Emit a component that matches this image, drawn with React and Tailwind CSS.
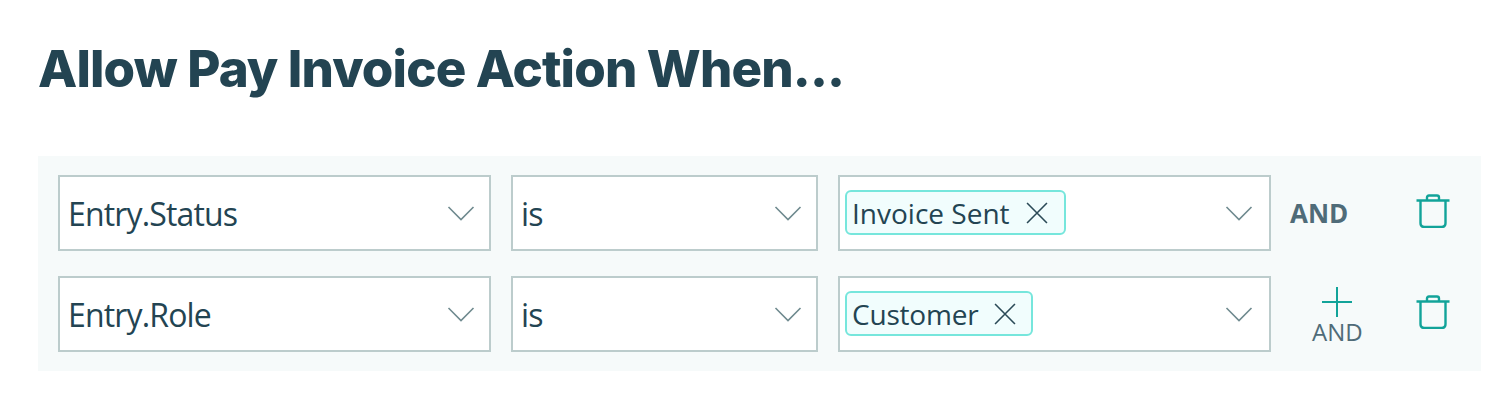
const Chevron = () => (
  <svg width="28" height="16" viewBox="0 0 28 16" fill="none" stroke="#6f8a8f" strokeWidth="1.6" className="shrink-0">
    <path d="M1.5 2 L14 14.5 L26.5 2" />
  </svg>
);

const TrashIcon = () => (
  <svg width="34" height="34" viewBox="0 0 34 34" fill="none" stroke="#12a399" strokeWidth="2.4" strokeLinejoin="round">
    <path d="M0.5 6.5 H33.5" />
    <path d="M11 6.5 V3.5 Q11 1.5 13 1.5 H21 Q23 1.5 23 3.5 V6.5" />
    <path d="M4.5 6.5 V29 Q4.5 33 8.5 33 H25.5 Q29.5 33 29.5 29 V6.5" />
  </svg>
);

const PlusIcon = () => (
  <svg width="30" height="30" viewBox="0 0 30 30" fill="none" stroke="#12a399" strokeWidth="2">
    <path d="M15 0 V30 M0 15 H30" />
  </svg>
);

const CloseIcon = () => (
  <svg width="22" height="22" viewBox="0 0 21 21" fill="none" stroke="#2b4a57" strokeWidth="1.5">
    <path d="M1 1 L20 20 M20 1 L1 20" />
  </svg>
);

const Select = ({ width, right, children }) => (
  <div className={`${width} ${right} h-[75.5px] shrink-0 flex items-center justify-between bg-white border-2 border-[#bccccc] pl-[8px]`}>
    <div className="flex items-center text-[32px] tracking-[-0.85px] text-[#234452]">{children}</div>
    <Chevron />
  </div>
);

const Tag = ({ label, width, spacing }) => (
  <div className={`${width} h-[45px] -ml-[3px] flex items-center rounded-[6px] border-2 border-[#76e6dc] bg-[#f1fdfd] pl-[5px] text-[28px] ${spacing} text-[#234452]`}>
    <span>{label}</span>
    <span className="ml-[16px] flex items-center"><CloseIcon /></span>
  </div>
);

const Row = ({ field, tag, action }) => (
  <div className="flex items-center gap-[20px]">
    <Select width="w-[433px]" right="pr-[14px]"><span className="pt-[2px]">{field}</span></Select>
    <Select width="w-[307px]" right="pr-[14px]"><span className="pt-[2px]">is</span></Select>
    <Select width="w-[433px]" right="pr-[16px]">{tag}</Select>
    <div className="w-[134px] shrink-0 flex items-center h-[75px]">{action}</div>
    <div className="-ml-[29px] -mt-[4px]"><TrashIcon /></div>
  </div>
);

export default function App() {
  return (
    <div className="w-[1500px] h-[412px] bg-white overflow-hidden font-['Open_Sans','Noto_Sans',sans-serif]">
      <h1 className="pl-[38px] pt-[38px] h-[156px] text-[51px] leading-[62px] font-extrabold tracking-[-0.85px] text-[#234452] font-['Inter',sans-serif]">
        Allow Pay Invoice Action When...
      </h1>
      <div className="ml-[38px] w-[1443px] h-[215px] bg-[#f6fafa] px-[20px] pt-[19px] flex flex-col gap-[25.5px]">
        <Row
          field="Entry.Status"
          tag={<Tag label="Invoice Sent" width="w-[221px]" spacing="tracking-normal" />}
          action={<span className="-ml-[1px] pt-[2px] text-[26px] font-bold text-[#4f6b78]">AND</span>}
        />
        <Row
          field="Entry.Role"
          tag={<Tag label="Customer" width="w-[188px]" spacing="tracking-[-0.2px]" />}
          action={
            <div className="ml-[21px] mt-[6px] flex flex-col items-center">
              <PlusIcon />
              <span className="mt-[1px] text-[24px] leading-[28px] text-[#4f6b78]">AND</span>
            </div>
          }
        />
      </div>
    </div>
  );
}
